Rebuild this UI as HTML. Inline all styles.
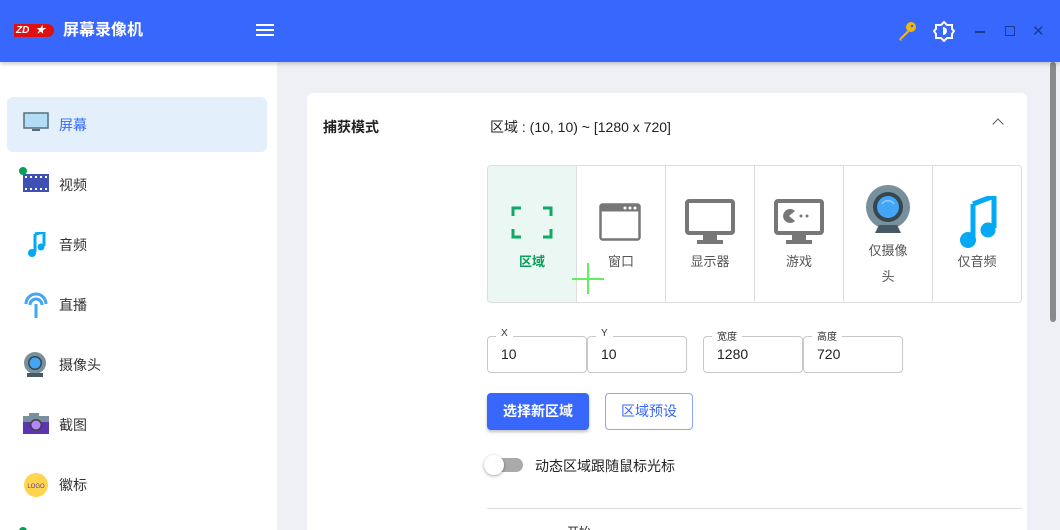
<!DOCTYPE html><html><head><meta charset="utf-8"><style>
*{box-sizing:border-box;margin:0;padding:0}
html{width:1060px;height:530px;overflow:hidden}
body{width:1060px;height:530px;overflow:hidden;background:#eef0f5;font-family:"Liberation Sans","Noto Sans CJK SC",sans-serif;position:relative;color:#333}
.hdr{position:absolute;left:0;top:0;width:1060px;height:62px;background:#3867fd;box-shadow:0 2px 4px rgba(0,0,0,.2);z-index:3}
.side{position:absolute;left:0;top:62px;width:277px;height:468px;background:#fff}
.item{position:absolute;left:7px;width:260px;height:55px;border-radius:6px;font-size:14px;color:#333}
.item span{position:absolute;left:52px;top:18px}
.item svg{position:absolute;left:16px;top:15px}
.card{position:absolute;left:307px;top:93px;width:720px;height:437px;background:#fff;border-radius:6px 6px 0 0}
.abs{position:absolute}
.tiles{position:absolute;left:487px;top:165px;width:535px;height:138px;border:1px solid #ddd;border-radius:4px;display:flex;overflow:hidden}
.tile{flex:1;border-right:1px solid #ddd;position:relative;font-size:13px;color:#555;text-align:center}
.tile:last-child{border-right:none}
.fld{position:absolute;top:336px;width:100px;height:37px;border:1px solid #c8c8c8;border-radius:4px;font-size:14px;padding:9px 0 0 13px;color:#222}
.fld i{position:absolute;top:-9px;left:8px;background:#fff;padding:0 5px;font-size:10px;font-style:normal;color:#333}
</style></head><body>
<div class="hdr">
<div class="abs" style="left:14px;top:24px;width:40px;height:13px;background:#e01010;border-radius:0 7px 7px 0;color:#fff;font-size:10px;font-weight:bold;line-height:13px;font-style:italic;padding-left:2px">ZD<span style="margin-left:6px">★</span></div>
<div class="abs" style="left:63px;top:21px;color:#fff;font-size:16px;font-weight:bold;line-height:20px">屏幕录像机</div>
<div class="abs" style="left:256px;top:24px;width:18px;height:2px;background:#fff;box-shadow:0 5px 0 #fff,0 10px 0 #fff"></div>
<svg class="abs" style="left:896px;top:20px" width="22" height="22" viewBox="0 0 22 22"><circle cx="15" cy="7" r="5" fill="#f2b900"/><circle cx="16" cy="6" r="1.3" fill="#3867fd"/><path d="M12 10 L3 19 L5 21 L6 20 L5 19 L7 18 L13 12Z" fill="#f2b900"/></svg>
<svg class="abs" style="left:933px;top:20px" width="22" height="22" viewBox="0 0 22 22"><path d="M11 2 L14 5 L19 5 L19 9 L21 11 L19 14 L19 18 L14 18 L11 21 L8 18 L3 18 L3 14 L1 11 L3 9 L3 5 L8 5Z" fill="none" stroke="#fff" stroke-width="2"/><path d="M10 7 A4 4 0 0 1 10 15Z" fill="#fff"/></svg>
<div class="abs" style="left:975px;top:31px;width:10px;height:1.5px;background:#1b3c8f"></div>
<div class="abs" style="left:1005px;top:26px;width:10px;height:10px;border:1.5px solid #1b3c8f"></div>
<div class="abs" style="left:1032px;top:22px;color:#1b3c8f;font-size:15px">✕</div>
</div>
<div class="side">
<div class="item" style="top:35px;background:#e3f0fb"><svg width="26" height="20"><rect x="1" y="1" width="24" height="15" fill="#b3dcf7" stroke="#546e7a" stroke-width="1.5"/><rect x="9" y="17" width="8" height="2" fill="#546e7a"/></svg><span style="color:#3867fd">屏幕</span></div>
<div class="item" style="top:95px"><svg width="26" height="20"><rect x="0" y="2" width="26" height="18" fill="#3f51b5"/><g fill="#fff"><rect x="2" y="4" width="2" height="2"/><rect x="7" y="4" width="2" height="2"/><rect x="12" y="4" width="2" height="2"/><rect x="17" y="4" width="2" height="2"/><rect x="22" y="4" width="2" height="2"/><rect x="2" y="16" width="2" height="2"/><rect x="7" y="16" width="2" height="2"/><rect x="12" y="16" width="2" height="2"/><rect x="17" y="16" width="2" height="2"/><rect x="22" y="16" width="2" height="2"/></g></svg><div class="abs" style="left:12px;top:10px;width:8px;height:8px;border-radius:50%;background:#0a9e5c"></div><span>视频</span></div>
<div class="item" style="top:155px"><svg width="26" height="26"><path d="M12 2 L21 0 L21 14 M12 2 L12 20" stroke="#03a9f4" stroke-width="3" fill="none"/><circle cx="9" cy="21" r="4" fill="#03a9f4"/><circle cx="18" cy="15" r="3.5" fill="#03a9f4"/></svg><span>音频</span></div>
<div class="item" style="top:215px"><svg width="26" height="28"><path d="M3 12 A10 10 0 0 1 23 12" stroke="#42a5f5" stroke-width="3" fill="none"/><path d="M7 13 A6 6 0 0 1 19 13" stroke="#42a5f5" stroke-width="3" fill="none"/><line x1="13" y1="12" x2="13" y2="26" stroke="#42a5f5" stroke-width="3"/></svg><span>直播</span></div>
<div class="item" style="top:275px"><svg width="26" height="26"><circle cx="12" cy="11" r="11" fill="#78909c"/><circle cx="12" cy="11" r="7" fill="#37474f"/><circle cx="12" cy="11" r="5.5" fill="#42a5f5"/><rect x="4" y="21" width="16" height="4" fill="#455a64"/></svg><span>摄像头</span></div>
<div class="item" style="top:335px"><svg width="26" height="24"><rect x="0" y="4" width="26" height="18" fill="#5e35b1"/><rect x="0" y="4" width="26" height="6" fill="#78909c"/><rect x="6" y="1" width="10" height="4" fill="#78909c"/><circle cx="13" cy="13" r="6" fill="#424242"/><circle cx="13" cy="13" r="4.5" fill="#b388ff"/></svg><span>截图</span></div>
<div class="item" style="top:395px"><svg width="26" height="26"><circle cx="13" cy="13" r="12" fill="#ffd54f"/><text x="13" y="16" font-size="6" text-anchor="middle" fill="#5e35b1" font-family="Liberation Sans">LOGO</text></svg><span>徽标</span></div>
<div class="abs" style="left:19px;top:465px;width:8px;height:8px;border-radius:50%;background:#0a9e5c"></div>
</div>
<div class="abs" style="left:1050px;top:62px;width:6px;height:260px;background:#8a8a8a;border-radius:3px"></div>
<div class="card"></div>
<div class="abs" style="left:323px;top:117px;font-size:14px;font-weight:bold;color:#222">捕获模式</div>
<div class="abs" style="left:490px;top:117px;font-size:14px;color:#222">区域 : (10, 10) ~ [1280 x 720]</div>
<div class="abs" style="left:994px;top:120px;width:8px;height:8px;border-left:1.5px solid #555;border-top:1.5px solid #555;transform:rotate(45deg)"></div>
<div class="tiles">
<div class="tile" style="background:#ebf7f2;color:#0a9e5c;font-weight:bold"><svg class="abs" style="left:23px;top:40px" width="42" height="33" fill="none" stroke="#10a865" stroke-width="3"><path d="M2 10V2H10M32 2H40V10M40 23V31H32M10 31H2V23"/></svg><div class="abs" style="left:0;right:0;top:85px">区域</div></div>
<div class="tile"><svg class="abs" style="left:22px;top:37px" width="42" height="38"><rect x="1.5" y="1.5" width="39" height="35" rx="2" fill="none" stroke="#777" stroke-width="2.5"/><rect x="1.5" y="1.5" width="39" height="7" fill="#777"/><circle cx="26" cy="5" r="1.5" fill="#fff"/><circle cx="31" cy="5" r="1.5" fill="#fff"/><circle cx="36" cy="5" r="1.5" fill="#fff"/></svg><div class="abs" style="left:0;right:0;top:85px">窗口</div></div>
<div class="tile"><svg class="abs" style="left:19px;top:33px" width="50" height="46"><rect x="2" y="2" width="46" height="32" rx="2" fill="none" stroke="#777" stroke-width="4"/><rect x="18" y="36" width="14" height="5" fill="#777"/><rect x="12" y="41" width="26" height="4" fill="#777"/></svg><div class="abs" style="left:0;right:0;top:85px">显示器</div></div>
<div class="tile"><svg class="abs" style="left:19px;top:33px" width="50" height="46"><rect x="2" y="2" width="46" height="32" rx="2" fill="none" stroke="#777" stroke-width="4"/><path d="M21 12 A7 7 0 1 0 21 22 L15 17Z" fill="#777"/><circle cx="27" cy="17" r="1.5" fill="#777"/><circle cx="33" cy="17" r="1.5" fill="#777"/><rect x="18" y="36" width="14" height="5" fill="#777"/><rect x="12" y="41" width="26" height="4" fill="#777"/></svg><div class="abs" style="left:0;right:0;top:85px">游戏</div></div>
<div class="tile"><svg class="abs" style="left:20px;top:19px" width="48" height="48"><circle cx="24" cy="22" r="22" fill="#78909c"/><circle cx="24" cy="22" r="15" fill="#37474f"/><circle cx="24" cy="22" r="11" fill="#42a5f5"/><path d="M18 19 A7 7 0 0 1 30 19" stroke="#90caf9" stroke-width="1.5" fill="none"/><path d="M11 48 L15 40 H33 L37 48Z" fill="#455a64"/></svg><div class="abs" style="left:0;right:0;top:72px;line-height:26px">仅摄像<br>头</div></div>
<div class="tile"><svg class="abs" style="left:26px;top:30px" width="38" height="54"><path d="M14 8 L35 0 L35 32 M14 8 L14 44" stroke="#03a9f4" stroke-width="5" fill="none"/><circle cx="9" cy="44" r="8" fill="#03a9f4"/><circle cx="29" cy="34" r="7.5" fill="#03a9f4"/></svg><div class="abs" style="left:0;right:0;top:85px">仅音频</div></div>
</div>
<div class="abs" style="left:587px;top:263px;width:2px;height:31px;background:#5fef5f"></div>
<div class="abs" style="left:572px;top:278px;width:32px;height:2px;background:#5fef5f"></div>
<div class="fld" style="left:487px">10<i>X</i></div>
<div class="fld" style="left:587px">10<i>Y</i></div>
<div class="fld" style="left:703px">1280<i>宽度</i></div>
<div class="fld" style="left:803px">720<i>高度</i></div>
<div class="abs" style="left:487px;top:393px;width:102px;height:37px;background:#3867fd;border-radius:4px;color:#fff;font-size:14px;font-weight:bold;text-align:center;line-height:37px;box-shadow:0 2px 3px rgba(0,0,0,.25)">选择新区域</div>
<div class="abs" style="left:605px;top:393px;width:88px;height:37px;border:1px solid #8aa5fd;border-radius:4px;color:#3867fd;font-size:14px;text-align:center;line-height:35px">区域预设</div>
<div class="abs" style="left:489px;top:458px;width:34px;height:14px;background:#aaa;border-radius:7px"></div>
<div class="abs" style="left:484px;top:455px;width:20px;height:20px;background:#fff;border-radius:50%;box-shadow:0 1px 3px rgba(0,0,0,.35)"></div>
<div class="abs" style="left:535px;top:456px;font-size:14px;color:#222">动态区域跟随鼠标光标</div>
<div class="abs" style="left:487px;top:508px;width:535px;height:1px;background:#ddd"></div>
<div class="abs" style="left:567px;top:523px;font-size:12px;color:#222">开始</div>
</body></html>
